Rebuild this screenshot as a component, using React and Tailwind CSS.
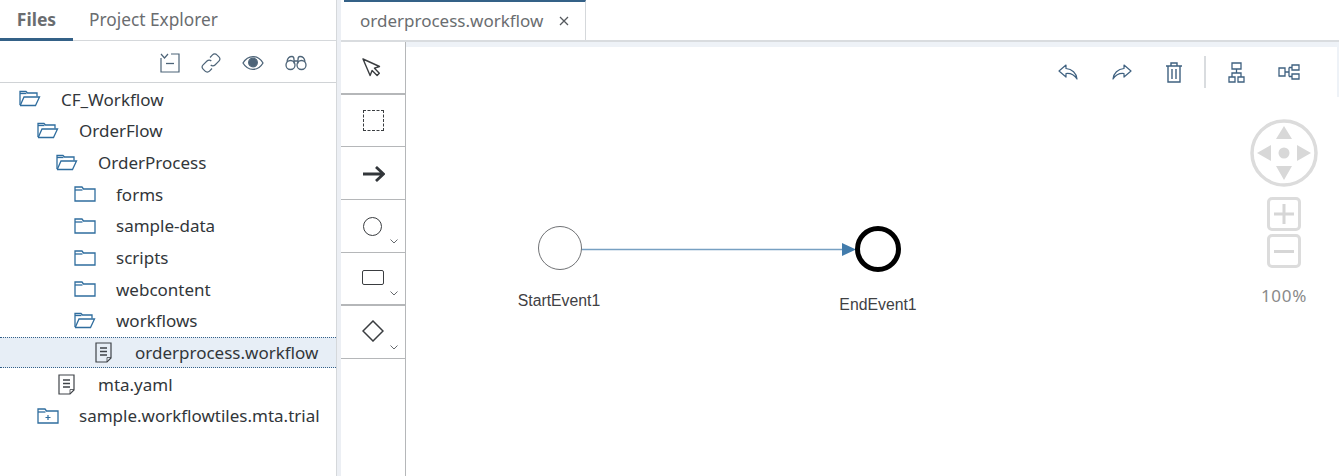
import { useState } from 'react'

const FONT = '[font-family:"Noto_Sans",sans-serif]'

const TREE = [
  { name: 'CF_Workflow', depth: 0, icon: 'open' },
  { name: 'OrderFlow', depth: 1, icon: 'open' },
  { name: 'OrderProcess', depth: 2, icon: 'open' },
  { name: 'forms', depth: 3, icon: 'closed' },
  { name: 'sample-data', depth: 3, icon: 'closed' },
  { name: 'scripts', depth: 3, icon: 'closed' },
  { name: 'webcontent', depth: 3, icon: 'closed' },
  { name: 'workflows', depth: 3, icon: 'open' },
  { name: 'orderprocess.workflow', depth: 4, icon: 'file', selected: true },
  { name: 'mta.yaml', depth: 2, icon: 'file' },
  { name: 'sample.workflowtiles.mta.trial', depth: 1, icon: 'project' },
]

const INDENT = ['pl-[19px]', 'pl-[37px]', 'pl-[56px]', 'pl-[74px]', 'pl-[93px]']

function TreeIcon({ type }) {
  if (type === 'open') {
    return (
      <svg width="22" height="18" viewBox="0 0 22 18" fill="none" stroke="#2f6d9e" strokeWidth="1.3">
        <path d="M1 15V1.500h6l1.500 1.500H18V6.500" />
        <path d="M1 3.500h6.500" />
        <path d="M1 15.500h15.500L20.500 7H5L1.200 15.500" />
      </svg>
    )
  }
  if (type === 'closed') {
    return (
      <svg width="22" height="18" viewBox="0 0 22 18" fill="none" stroke="#2f6d9e" strokeWidth="1.3">
        <path d="M1 16V2h7l1.500 2H21v12z" />
        <path d="M1 5h7.500" />
      </svg>
    )
  }
  if (type === 'project') {
    return (
      <svg width="22" height="18" viewBox="0 0 22 18" fill="none" stroke="#2f6d9e" strokeWidth="1.3">
        <path d="M1 16V2h7l1.500 2H21v12z" />
        <path d="M1 5h7.500" />
        <path d="M11 8v5M8.500 10.500h5" strokeWidth="1.2" />
      </svg>
    )
  }
  return (
    <svg width="18" height="21" viewBox="0 0 18 21" fill="none" stroke="#3f4348" strokeWidth="1.2">
      <path d="M1 1h15v15l-4 4H1z" />
      <path d="M16 15.500h-4V20" strokeWidth="0.8" />
      <path d="M5 6h7M5 9.500h7M5 13h7" strokeWidth="1.3" />
    </svg>
  )
}

function TreeRow({ item }) {
  const icon = item.icon === 'file' ? 'w-[18px] mr-[22px] ml-[2px]' : 'w-[22px] mr-[20px]'
  return (
    <div
      className={`flex h-[31.65px] items-center ${INDENT[item.depth]} ${
        item.selected ? 'bg-[#e7eef6] border-y border-dotted border-[#34618a]' : ''
      }`}
    >
      <span className={`flex shrink-0 ${icon}`}>
        <TreeIcon type={item.icon} />
      </span>
      <span className="whitespace-nowrap text-[17px] leading-none text-[#32363a]">{item.name}</span>
    </div>
  )
}

function SideToolbar() {
  return (
    <div className="flex h-[42px] items-center justify-end gap-[21px] border-b border-[#d0d3d6] pr-[29px] pt-[2px]">
      <svg width="20" height="20" viewBox="0 0 20 20" fill="none" stroke="#4d6478" strokeWidth="1.2">
        <path d="M1 1l3.500 4L8 1" />
        <path d="M1 5v14h18V1h-8" />
        <path d="M6 10.500h8" strokeWidth="1.3" />
      </svg>
      <svg width="20" height="20" viewBox="0 0 20 20" fill="none" stroke="#4d6478" strokeWidth="1.2">
        <path d="M9 4.500l2.500-2.600a3 3 0 0 1 4.400 0l2 2a3 3 0 0 1 0 4.200L14 12a3 3 0 0 1-4.300 0" />
        <path d="M11 15.500l-2.500 2.600a3 3 0 0 1-4.400 0l-2-2a3 3 0 0 1 0-4.200L6 8a3 3 0 0 1 4.300 0" />
      </svg>
      <svg width="22" height="16" viewBox="0 0 22 16" fill="none" stroke="#4d6478" strokeWidth="1.3">
        <path d="M1 8c5-8.500 15-8.500 20 0-5 8.500-15 8.500-20 0z" />
        <circle cx="11" cy="7.500" r="4.300" fill="#4d6478" />
      </svg>
      <svg width="22" height="16" viewBox="0 0 22 16" fill="none" stroke="#4d6478" strokeWidth="1.3">
        <circle cx="5.500" cy="10" r="4.500" />
        <circle cx="16.500" cy="10" r="4.500" />
        <path d="M2 6.500C2.500 3 4 1.500 7 1.500c1.500 0 2 1 2 3v4M20 6.500c-.5-3.500-2-5-5-5-1.500 0-2 1-2 3v4M9 6h4" />
      </svg>
    </div>
  )
}

function Sidebar() {
  const [tab, setTab] = useState('Files')
  return (
    <aside className="flex w-[336px] shrink-0 flex-col bg-white">
      <div className="flex h-[41px] border-b border-[#d5d8db]">
        {['Files', 'Project Explorer'].map((t) => (
          <button
            key={t}
            onClick={() => setTab(t)}
            className={`h-[41px] ${
              t === 'Files'
                ? 'w-[73px] border-b-[3px] border-[#346187] text-[17.5px] font-bold text-[#6a6d70]'
                : 'ml-[16px] pb-[1px] text-[17.3px] text-[#6a6d70]'
            }`}
          >
            {t}
          </button>
        ))}
      </div>
      <SideToolbar />
      <div className="pt-[0.5px]">
        {TREE.map((item) => (
          <TreeRow key={item.name} item={item} />
        ))}
      </div>
    </aside>
  )
}

function Chevron() {
  return (
    <svg className="absolute right-[7px] bottom-[8px]" width="8" height="5" viewBox="0 0 8 5" fill="none" stroke="#55595e" strokeWidth="0.9">
      <path d="M0.500 0.500L4 4l3.500-3.500" />
    </svg>
  )
}

const PALETTE = [
  {
    key: 'select',
    h: 'h-[53px] border-b-2',
    svg: (
      <svg className="mr-[4px] mt-[1px]" width="20" height="20" viewBox="0 0 20 20" fill="none" stroke="#3a3d40" strokeWidth="1.400" strokeLinejoin="round">
        <path d="M1 1l16.500 7.500-5 1.700 4.800 5-2.200 2.300-5-5-2 5z" />
      </svg>
    ),
  },
  {
    key: 'marquee',
    h: 'h-[52px] border-b',
    svg: <div className="h-[21px] w-[21px] border border-dashed border-[#3a3d40]" />,
  },
  {
    key: 'arrow',
    h: 'h-[53px] border-b',
    svg: (
      <svg className="mt-[1px]" width="22" height="16" viewBox="0 0 22 16" fill="none" stroke="#32363a" strokeWidth="2.800">
        <path d="M0 8h20M13 1l7.500 7-7.500 7" />
      </svg>
    ),
  },
  {
    key: 'event',
    h: 'h-[53px] border-b',
    more: true,
    svg: <div className="mr-[3px] h-[19px] w-[19px] rounded-full border-[1.500px] border-[#3a3d40]" />,
  },
  {
    key: 'task',
    h: 'h-[53px] border-b-2',
    more: true,
    svg: <div className="mr-[1px] mb-[2px] h-[15px] w-[22px] rounded-[2px] border-[1.500px] border-[#3a3d40]" />,
  },
  {
    key: 'gateway',
    h: 'h-[53px] border-b',
    more: true,
    svg: (
      <svg className="mr-[1px] mb-[2px]" width="22" height="22" viewBox="0 0 22 22" fill="none" stroke="#3a3d40" strokeWidth="1.500">
        <path d="M11 1l10 10-10 10L1 11z" />
      </svg>
    ),
  },
]

function Palette() {
  return (
    <div className="w-[65px] shrink-0 border-r border-[#b5b7b9] bg-white">
      {PALETTE.map((p) => (
        <div key={p.key} className={`relative flex items-center justify-center border-[#b5b7b9] pl-[1px] ${p.h}`}>
          {p.svg}
          {p.more && <Chevron />}
        </div>
      ))}
    </div>
  )
}

function CanvasToolbar() {
  return (
    <div className="flex h-[50px] items-center justify-end border-r-2 border-[#eef2f7] pr-[37px] text-[#3f6180]">
      <div className="flex items-center gap-[34px]">
        <svg width="20" height="16" viewBox="0 0 20 16" fill="none" stroke="currentColor" strokeWidth="1.200" strokeLinejoin="round">
          <path d="M8 1L1 7l7 6V9.500c4-.5 8 1 11 5.500-.5-6-5-10-11-10.500z" />
        </svg>
        <svg width="20" height="16" viewBox="0 0 20 16" fill="none" stroke="currentColor" strokeWidth="1.200" strokeLinejoin="round">
          <path d="M12 1l7 6-7 6V9.500C8 9 4 10.500 1 15c.5-6 5-10 11-10.500z" />
        </svg>
        <svg width="16" height="21" viewBox="0 0 16 21" fill="none" stroke="currentColor" strokeWidth="1.400">
          <path d="M0 4h16M5 4V1h6v3M2 4v16h12V4M6 7v10M10 7v10" />
        </svg>
      </div>
      <div className="mx-[22px] h-[32px] w-[2px] bg-[#d9dcdf]" />
      <div className="flex items-center gap-[33px]">
        <svg width="17" height="21" viewBox="0 0 17 21" fill="none" stroke="currentColor" strokeWidth="1.300">
          <path d="M4 1h9v6H4zM1 15h6v5H1zM10 15h6v5h-6zM8.500 7v4M4 15v-4h9v4" />
        </svg>
        <svg width="22" height="16" viewBox="0 0 22 16" fill="none" stroke="currentColor" strokeWidth="1.300">
          <path d="M1 4h6v8H1zM14 1h7v5h-7zM14 10h7v5h-7zM7 8h4M11 3.500v9M11 3.500h3M11 12.500h3" />
        </svg>
      </div>
    </div>
  )
}

function NavControl() {
  return (
    <div className="absolute top-[72px] right-[21px] flex w-[68px] flex-col items-center">
      <svg width="68" height="68" viewBox="0 0 68 68" fill="#d8d8d8">
        <circle cx="34" cy="34" r="32" fill="none" stroke="#dcdcdc" strokeWidth="3.500" />
        <path d="M34 7l8 13H26zM34 61l-8-14h16zM7 34l14-8v16zM61 34l-14 8V26z" />
        <circle cx="34" cy="34" r="5.500" />
      </svg>
      <div className="mt-[10px] flex h-[34px] w-[34px] items-center justify-center rounded-[5px] border-[3px] border-[#dcdcdc]">
        <svg width="20" height="20" viewBox="0 0 20 20" stroke="#d6d6d6" strokeWidth="3">
          <path d="M0 10h20M10 0v20" />
        </svg>
      </div>
      <div className="mt-[3px] flex h-[34px] w-[34px] items-center justify-center rounded-[5px] border-[3px] border-[#dcdcdc]">
        <div className="h-[3px] w-[20px] bg-[#d6d6d6]" />
      </div>
      <div className="mt-[19px] text-[17px] leading-none tracking-[0.7px] whitespace-nowrap text-[#8a8a8a]">100%</div>
    </div>
  )
}

function Diagram() {
  return (
    <>
      {/* arrow between the two events, canvas coordinates */}
      <svg className="absolute top-[191px] left-[174px]" width="276" height="24" viewBox="0 0 276 24" fill="none">
        <path d="M0 11.500h264" stroke="#77a0c2" strokeWidth="1.500" />
        <path d="M262 5l14 6.500-14 6.500z" fill="#427cac" />
      </svg>
      <div className="absolute top-[179px] left-[131.5px] h-[44px] w-[44px] rounded-full border-[1.500px] border-[#707275] bg-white" />
      <div className="absolute top-[246px] left-[103px] w-[100px] text-center text-[15.800px] leading-none text-[#3f4144] [font-family:'Liberation_Sans',sans-serif]">
        StartEvent1
      </div>
      <div className="absolute top-[179px] left-[449px] h-[46px] w-[46px] rounded-full border-[5.500px] border-black bg-white" />
      <div className="absolute top-[250px] left-[422px] w-[100px] text-center text-[15.800px] leading-none text-[#3f4144] [font-family:'Liberation_Sans',sans-serif]">
        EndEvent1
      </div>
    </>
  )
}

function Editor() {
  return (
    <main className="flex min-w-0 flex-1 flex-col">
      <div className="flex h-[42px] shrink-0 border-b-2 border-[#d9dcdf] pl-[3px]">
        <div className="flex w-[242px] items-center justify-between border-t-2 border-r border-t-[#346187] border-r-[#d5d8db] pr-[16px] pl-[16px] text-[#6a6d70]">
          <span className="text-[17px]">orderprocess.workflow</span>
          <svg width="10" height="10" viewBox="0 0 10 10" stroke="#55595e" strokeWidth="1.300">
            <path d="M1 1l8 8M9 1L1 9" />
          </svg>
        </div>
      </div>
      <div className="flex min-h-0 flex-1">
        <Palette />
        <div className="relative flex-1 border-t-[5px] border-[#eef2f7] bg-white">
          <CanvasToolbar />
          <NavControl />
          <Diagram />
        </div>
      </div>
    </main>
  )
}

export default function App() {
  return (
    <div className={`flex h-[476px] w-[1339px] overflow-hidden bg-white ${FONT}`}>
      <Sidebar />
      <div className="w-[5px] shrink-0 border-l border-[#d5d8db] bg-[#eceff4]" />
      <Editor />
    </div>
  )
}
